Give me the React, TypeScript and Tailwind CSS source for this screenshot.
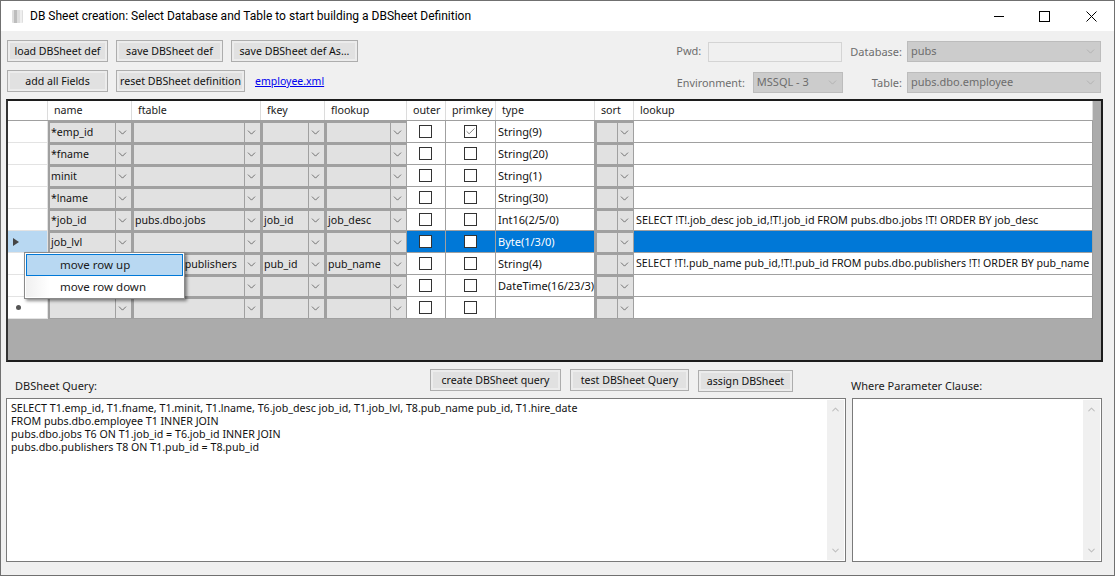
import { ChevronDown, ChevronUp, Check } from "lucide-react";

const cols = "grid-cols-[40px_84px_129px_64px_82px_39px_50px_99px_39px_459px]";

const rows = [
  { name: "*emp_id", ftable: "", fkey: "", flookup: "", prim: true, type: "String(9)", lookup: "" },
  { name: "*fname", ftable: "", fkey: "", flookup: "", type: "String(20)", lookup: "" },
  { name: "minit", ftable: "", fkey: "", flookup: "", type: "String(1)", lookup: "" },
  { name: "*lname", ftable: "", fkey: "", flookup: "", type: "String(30)", lookup: "" },
  {
    name: "*job_id",
    ftable: "pubs.dbo.jobs",
    fkey: "job_id",
    flookup: "job_desc",
    type: "Int16(2/5/0)",
    lookup: "SELECT !T!.job_desc job_id,!T!.job_id FROM pubs.dbo.jobs !T! ORDER BY job_desc",
    lookupSize: "text-[10.8px]",
  },
  { name: "job_lvl", ftable: "", fkey: "", flookup: "", type: "Byte(1/3/0)", lookup: "", selected: true },
  {
    name: "",
    ftable: "pubs.dbo.publishers",
    fkey: "pub_id",
    flookup: "pub_name",
    type: "String(4)",
    lookup: "SELECT !T!.pub_name pub_id,!T!.pub_id FROM pubs.dbo.publishers !T! ORDER BY pub_name",
    lookupSize: "text-[10.6px]",
  },
  { name: "", ftable: "", fkey: "", flookup: "", type: "DateTime(16/23/3)", lookup: "" },
  { name: "", ftable: "", fkey: "", flookup: "", type: "", lookup: "", isNew: true },
];

function Btn({ label, w }: { label: string; w: string }) {
  return (
    <button className={`h-[22px] ${w} shrink-0 border border-[#adadad] bg-[#e1e1e1] text-[10.6px] leading-[18px] text-[#111] shadow-[inset_0_0_0_2px_#ececec] whitespace-nowrap`}>
      {label}
    </button>
  );
}

function Combo({ text }: { text: string }) {
  return (
    <div className="flex h-[22px] border-r border-b border-[#a0a0a0] bg-[#e1e1e1] border-l-2 border-t-2 border-l-[#a0a0a0] border-t-[#a0a0a0] min-w-0 text-[10.6px] text-[#111]">
      <div className="flex-1 min-w-0 overflow-hidden whitespace-nowrap pl-[1px] leading-[18px]">{text}</div>
      <div className="flex w-[16px] shrink-0 items-center justify-center border-l border-[#a0a0a0] bg-[#e1e1e1] pr-[2px]">
        <ChevronDown className="h-[13px] w-[13px] shrink-0 text-[#444]" strokeWidth={1.3} />
      </div>
    </div>
  );
}

function Box({ checked }: { checked?: boolean }) {
  return (
    <div className="flex h-[13px] w-[13px] items-center justify-center border border-[#333] bg-white">
      {checked && <Check className="h-[11px] w-[11px] text-[#555]" strokeWidth={1.6} />}
    </div>
  );
}

function TopSelect({ text, w }: { text: string; w: string }) {
  return (
    <div className={`flex h-[21px] ${w} shrink-0 items-center justify-between border border-[#bcbcbc] bg-[#cccccc] pl-[3px] pr-[3px] text-[#6d6d6d]`}>
      <span>{text}</span>
      <ChevronDown className="h-[13px] w-[13px] text-[#a8a8a8]" strokeWidth={1.3} />
    </div>
  );
}

function Scrolled({ children, className }: { children?: React.ReactNode; className: string }) {
  return (
    <div className={`flex border border-[#7a7a7a] bg-white ${className}`}>
      <div className="flex-1 min-w-0 whitespace-pre pl-[4px] pt-[3px] text-[10.66px] leading-[13px] text-[#111]">{children}</div>
      <div className="my-[1px] mr-[1px] flex w-[17px] flex-col items-center justify-between bg-[#f0f0f0] py-[4px]">
        <ChevronUp className="h-[11px] w-[11px] text-[#c0c0c0]" strokeWidth={2.4} />
        <ChevronDown className="h-[11px] w-[11px] text-[#c0c0c0]" strokeWidth={2.4} />
      </div>
    </div>
  );
}

export default function App() {
  const hdr = "flex items-center h-[19px] border-r border-[#dcdcdc] bg-white pl-[6px] text-[10.7px]";
  return (
    <div className="flex h-[576px] w-[1115px] flex-col overflow-hidden border border-[#707070] bg-[#f0f0f0] font-['Noto_Sans',sans-serif] text-[11px] text-[#1a1a1a]">
      {/* title bar */}
      <div className="flex h-[30px] shrink-0 items-center bg-white pl-[11px] font-['Roboto',sans-serif] text-[12px] text-black">
        <svg width="11" height="13" viewBox="0 0 11 13" className="mr-[7px]">
          <rect x="0" y="0" width="11" height="13" rx="1" fill="#dedede" />
          <rect x="2" y="0" width="3" height="13" fill="#bdbdbd" />
          <rect x="8" y="0" width="2" height="13" fill="#efefef" />
        </svg>
        <span>DB Sheet creation: Select Database and Table to start building a DBSheet Definition</span>
        <div className="ml-auto flex items-center pr-[17px]">
          <svg width="10" height="10" viewBox="0 0 10 10" className="mr-[35px]"><path d="M0 5.5H10" stroke="#000" strokeWidth="1" /></svg>
          <svg width="11" height="11" viewBox="0 0 11 11" className="mr-[36px]"><rect x="0.5" y="0.5" width="10" height="10" fill="none" stroke="#000" strokeWidth="1" /></svg>
          <svg width="11" height="11" viewBox="0 0 11 11"><path d="M0.5 0.5L10.5 10.5M10.5 0.5L0.5 10.5" stroke="#000" strokeWidth="1" /></svg>
        </div>
      </div>

      <div className="flex flex-1 flex-col px-[5px]">
        {/* toolbar */}
        <div className="flex h-[68px] shrink-0 pt-[9px]">
          <div className="flex flex-col gap-[8px] pl-[1px]">
            <div className="flex gap-[8px]">
              <Btn label="load DBSheet def" w="w-[101px]" />
              <Btn label="save DBSheet def" w="w-[107px]" />
              <Btn label="save DBSheet def As..." w="w-[127px]" />
            </div>
            <div className="flex items-center gap-[8px]">
              <Btn label="add all Fields" w="w-[101px]" />
              <Btn label="reset DBSheet definition" w="w-[129px]" />
              <span className="ml-[2px] mt-[2px] text-[10.5px] text-[#0000ee] underline">employee.xml</span>
            </div>
          </div>
          <div className="ml-auto flex flex-col gap-[10px] pr-[8px] pt-[1px] text-[#6d6d6d]">
            <div className="flex items-center justify-end">
              <span className="mr-[7px]">Pwd:</span>
              <div className="mr-[8px] h-[20px] w-[134px] border border-[#d4d4d4] bg-[#f0f0f0]" />
              <span className="mr-[5px] pt-[1px]">Database:</span>
              <TopSelect text="pubs" w="w-[194px]" />
            </div>
            <div className="flex items-center justify-end">
              <span className="mr-[8px] pt-[1px] text-[10.8px]">Environment:</span>
              <TopSelect text="MSSQL - 3" w="w-[90px]" />
              <span className="ml-[29px] mr-[5px] pt-[1px]">Table:</span>
              <TopSelect text="pubs.dbo.employee" w="w-[194px]" />
            </div>
          </div>
        </div>

        {/* grid */}
        <div className="relative flex h-[263px] w-[1097px] shrink-0 flex-col border-2 border-[#1c1c1c] border-l-[#333] bg-[#ababab]">
          <div className={`grid w-[1085px] ${cols} border-b border-[#a0a0a0]`}>
            <div className={hdr} />
            <div className={hdr}>name</div>
            <div className={hdr}>ftable</div>
            <div className={hdr}>fkey</div>
            <div className={hdr}>flookup</div>
            <div className={hdr}>outer</div>
            <div className={hdr}>primkey</div>
            <div className={hdr}>type</div>
            <div className={hdr}>sort</div>
            <div className={hdr}>lookup</div>
          </div>
          {rows.map((r, i) => (
            <div key={i} className={`grid w-[1085px] ${cols} h-[22px]`}>
              <div className={`flex items-center border-r border-b border-[#e3e3e3] ${r.isNew ? "pl-[8px]" : "pl-[5px]"} ${r.selected ? "bg-[#b8d8f2]" : "bg-white"}`}>
                {r.selected && <div className="h-0 w-0 border-y-[4.5px] border-l-[6px] border-y-transparent border-l-[#444]" />}
                {r.isNew && <div className="h-[5px] w-[5px] rounded-full bg-[#555]" />}
              </div>
              <Combo text={r.name} />
              <Combo text={r.ftable} />
              <Combo text={r.fkey} />
              <Combo text={r.flookup} />
              <div className={`flex items-center justify-center border-r border-b border-[#a0a0a0] pr-[2px] ${r.selected ? "bg-[#0078d7]" : "bg-white"}`}><Box /></div>
              <div className={`flex items-center justify-center border-r border-b border-[#a0a0a0] ${r.selected ? "bg-[#0078d7]" : "bg-white"}`}><Box checked={r.prim} /></div>
              <div className={`border-r border-b border-[#a0a0a0] pl-[2px] leading-[21px] whitespace-nowrap ${r.selected ? "bg-[#0078d7] text-white" : "bg-white text-[#111]"}`}>{r.type}</div>
              <Combo text="" />
              <div className={`overflow-hidden border-r border-b border-[#a0a0a0] pl-[2px] leading-[21px] whitespace-nowrap ${r.lookupSize ?? ""} ${r.selected ? "bg-[#0078d7] text-white" : "bg-white text-[#111]"}`}>{r.lookup}</div>
            </div>
          ))}
          {/* context menu */}
          <div className="absolute left-[16px] top-[151px] z-10 h-[47px] w-[161px] border border-[#8a8a8a] bg-white p-[1px] shadow-[2px_2px_3px_rgba(0,0,0,0.45)]">
            <div className="h-[22px] border border-[#0078d7] bg-[#b8d8f2] pl-[33px] text-[11.5px] leading-[20px]">move row up</div>
            <div className="h-[21px] bg-gradient-to-r from-[#f0f0f0] from-0% to-white to-[15%] pl-[34px] text-[11.5px] leading-[22px]">move row down</div>
          </div>
        </div>

        {/* query section */}
        <div className="flex h-[36px] shrink-0 items-start">
          <span className="ml-[9px] mt-[16px] w-[415px] shrink-0">DBSheet Query:</span>
          <div className="mt-[7px] flex gap-[9px]">
            <Btn label="create DBSheet query" w="w-[131px]" />
            <Btn label="test DBSheet Query" w="w-[119px]" />
          </div>
          <div className="ml-[9px] mt-[8px]"><Btn label="assign DBSheet" w="w-[95px]" /></div>
          <span className="ml-[58px] mt-[16px]">Where Parameter Clause:</span>
        </div>
        <div className="flex shrink-0 gap-[6px]">
          <Scrolled className="h-[164px] w-[840px]">
            {"SELECT T1.emp_id, T1.fname, T1.minit, T1.lname, T6.job_desc job_id, T1.job_lvl, T8.pub_name pub_id, T1.hire_date\nFROM pubs.dbo.employee T1 INNER JOIN\npubs.dbo.jobs T6 ON T1.job_id = T6.job_id INNER JOIN\npubs.dbo.publishers T8 ON T1.pub_id = T8.pub_id"}
          </Scrolled>
          <Scrolled className="h-[164px] w-[250px]" />
        </div>
      </div>
    </div>
  );
}
